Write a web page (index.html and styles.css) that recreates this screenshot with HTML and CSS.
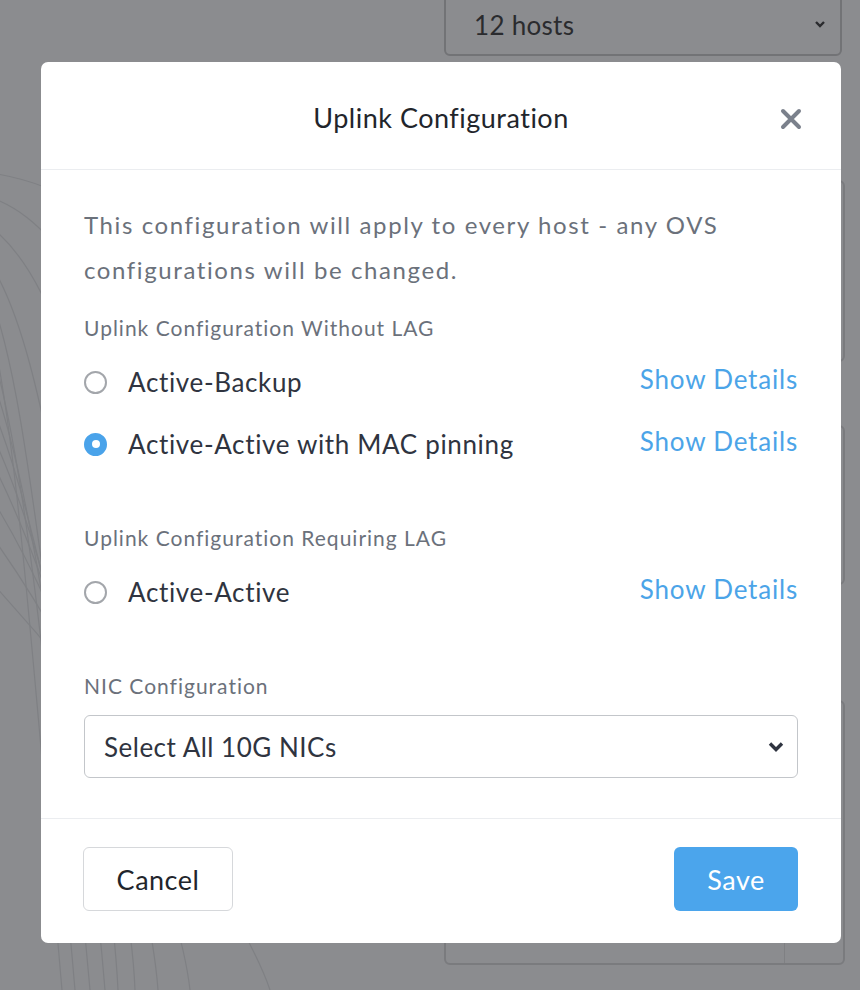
FILE: index.html
```html
<!DOCTYPE html>
<html lang="en">
<head>
<meta charset="utf-8">
<title>Uplink Configuration</title>
<link rel="stylesheet" href="styles.css">
</head>
<body>
<div class="backdrop">
  <svg class="curves" width="860" height="990" viewBox="0 0 860 990">
    <g fill="none" stroke="#7f8084" stroke-width="1.2">
      <path d="M-40 170 C 60 175, 120 220, 150 300"/>
      <path d="M-40 190 C 40 200, 60 260, 130 330"/>
      <path d="M-30 215 C 30 240, 60 330, 90 420"/>
      <path d="M-30 240 C 20 280, 45 420, 70 560"/>
      <path d="M-25 265 C 15 320, 35 520, 60 700"/>
      <path d="M-20 290 C 10 360, 30 620, 62 990"/>
      <path d="M-20 320 C 20 400, 50 700, 75 990"/>
      <path d="M-20 350 C 30 450, 70 760, 90 990"/>
      <path d="M-20 380 C 40 500, 90 800, 105 990"/>
      <path d="M-20 410 C 50 540, 110 830, 118 990"/>
      <path d="M-20 440 C 60 580, 130 860, 135 990"/>
      <path d="M-20 480 C 80 630, 150 880, 158 990"/>
      <path d="M-20 520 C 100 680, 180 900, 190 990"/>
      <path d="M-20 570 C 140 740, 250 930, 270 990"/>
    </g>
  </svg>
  <div class="bg-select"><span>12 hosts</span>
    <svg class="bg-chev" width="12" height="8" viewBox="0 0 12 8"><path d="M2 2 L6 6 L10 2" fill="none" stroke="#2a2b2e" stroke-width="2.4"/></svg>
  </div>
  <div class="bg-box bg-box1"></div>
  <div class="bg-box bg-box2"></div>
  <div class="bg-box bg-box3"><div class="bg-inner"></div></div>
</div>

<div class="modal">
  <div class="modal-header">
    <h1 class="modal-title">Uplink Configuration</h1>
    <svg class="close" width="22" height="22" viewBox="0 0 22 22"><path d="M3 3 L19 19 M19 3 L3 19" stroke="#7b818c" stroke-width="4" stroke-linecap="round"/></svg>
  </div>
  <div class="modal-body">
    <p class="intro">This configuration will apply to every host - any OVS configurations will be changed.</p>

    <div class="section-label first">Uplink Configuration Without LAG</div>
    <div class="option">
      <span class="radio"></span>
      <span class="option-label">Active-Backup</span>
      <a class="details">Show Details</a>
    </div>
    <div class="option second">
      <span class="radio checked"></span>
      <span class="option-label">Active-Active with MAC pinning</span>
      <a class="details">Show Details</a>
    </div>

    <div class="section-label spaced">Uplink Configuration Requiring LAG</div>
    <div class="option">
      <span class="radio"></span>
      <span class="option-label">Active-Active</span>
      <a class="details">Show Details</a>
    </div>

    <div class="section-label spaced">NIC Configuration</div>
    <div class="select">
      <span>Select All 10G NICs</span>
      <svg class="chev" width="18" height="13" viewBox="0 0 18 13"><path d="M3 3.5 L9 9.5 L15 3.5" fill="none" stroke="#2f3440" stroke-width="3.4"/></svg>
    </div>
  </div>
  <div class="modal-footer">
    <button class="btn btn-cancel">Cancel</button>
    <button class="btn btn-save">Save</button>
  </div>
</div>
</body>
</html>
```

FILE: styles.css
```css
html, body {
  margin: 0;
  padding: 0;
}
body {
  width: 860px;
  height: 990px;
  overflow: hidden;
  background: #8b8c8f;
  font-family: Lato, "Open Sans", "Liberation Sans", sans-serif;
  position: relative;
}
.backdrop {
  position: absolute;
  inset: 0;
}
.curves {
  position: absolute;
  left: 0;
  top: 0;
}
.bg-select {
  position: absolute;
  left: 444px;
  top: -14px;
  width: 398px;
  height: 70px;
  border: 2px solid #727376;
  border-radius: 6px;
  display: flex;
  align-items: center;
  justify-content: space-between;
  padding: 8px 14px 0 28px;
  box-sizing: border-box;
}
.bg-select span {
  font-size: 26px;
  color: #2a2b2e;
  letter-spacing: 0.3px;
}
.bg-chev {
  margin-top: -2px;
}
.bg-box {
  position: absolute;
  border: 2px solid #7a7b7e;
  border-radius: 6px;
  box-sizing: border-box;
}
.bg-box1 {
  left: 600px;
  top: 180px;
  width: 245px;
  height: 182px;
}
.bg-box2 {
  left: 600px;
  top: 425px;
  width: 245px;
  height: 160px;
}
.bg-box3 {
  left: 444px;
  top: 700px;
  width: 401px;
  height: 265px;
}
.bg-inner {
  position: absolute;
  left: 338px;
  top: 0;
  bottom: 0;
  border-left: 1.5px solid #7f8083;
}

.modal {
  position: relative;
  margin: 62px 0 0 41px;
  width: 800px;
  height: 881px;
  background: #fff;
  border-radius: 7px;
  box-sizing: border-box;
  display: flex;
  flex-direction: column;
}
.modal-header {
  height: 108px;
  padding-top: 4px;
  border-bottom: 1px solid #ebedf0;
  display: flex;
  align-items: center;
  justify-content: center;
  position: relative;
  box-sizing: border-box;
}
.modal-title {
  margin: 0;
  font-size: 27px;
  font-weight: 400;
  color: #22252b;
  letter-spacing: 0.5px;
}
.close {
  position: absolute;
  right: 39px;
  top: 46px;
}
.modal-body {
  padding: 32px 43px 0 43px;
  height: 648px;
  box-sizing: border-box;
}
.intro {
  margin: 0;
  font-size: 24px;
  line-height: 45px;
  color: #6b717b;
  letter-spacing: 1.6px;
}
.section-label {
  font-size: 21px;
  line-height: 30px;
  color: #6b717b;
  letter-spacing: 1px;
}
.section-label.first {
  margin-top: 21px;
}
.section-label.spaced {
  margin-top: 54px;
}
.option {
  display: flex;
  align-items: center;
  height: 50px;
  margin-top: 14px;
}
.option.second {
  margin-top: 12px;
}
.radio {
  width: 23px;
  height: 23px;
  border: 2px solid #a3a6ab;
  border-radius: 50%;
  box-sizing: border-box;
  margin-left: 0;
  flex-shrink: 0;
  position: relative;
}
.radio.checked {
  background: #4aa3ea;
  border-color: #4aa3ea;
}
.radio.checked::after {
  content: "";
  position: absolute;
  left: 5.5px;
  top: 5.5px;
  width: 8px;
  height: 8px;
  border-radius: 50%;
  background: #fff;
}
.option-label {
  margin-left: 21px;
  font-size: 26px;
  color: #2f3440;
  letter-spacing: 0.65px;
  flex: 1;
}
.details {
  font-size: 26px;
  color: #4ba4e8;
  letter-spacing: 0.8px;
  margin-top: -6px;
  cursor: pointer;
}
.select {
  margin-top: 14px;
  height: 63px;
  border: 1.5px solid #c3c6ca;
  border-radius: 6px;
  box-sizing: border-box;
  display: flex;
  align-items: center;
  justify-content: space-between;
  padding: 0 12px 0 19px;
}
.select span {
  font-size: 26px;
  color: #2f3440;
  letter-spacing: 0.5px;
}
.modal-footer {
  border-top: 1px solid #ebedf0;
  padding: 28px 43px 0 42px;
  display: flex;
  justify-content: space-between;
  align-items: flex-start;
  flex: 1;
}
.btn {
  height: 64px;
  border-radius: 6px;
  font-family: inherit;
  font-size: 27px;
  letter-spacing: 0.5px;
  cursor: pointer;
}
.btn-cancel {
  width: 150px;
  background: #fff;
  border: 1.5px solid #d6d8db;
  color: #22252b;
}
.btn-save {
  width: 124px;
  background: #4ba5ec;
  border: none;
  color: #fff;
}
```
